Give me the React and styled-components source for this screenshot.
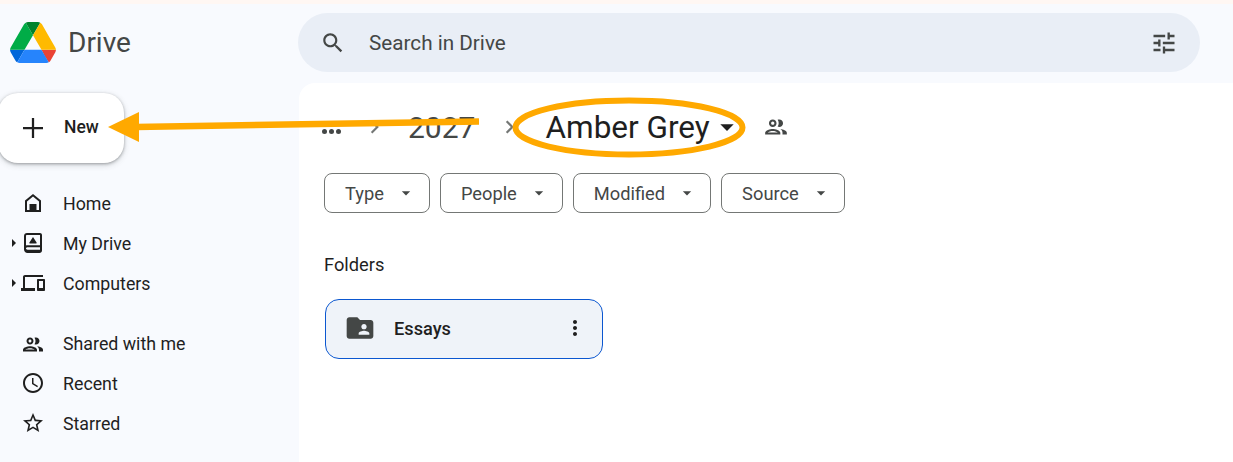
import React from "react";
import styled, { createGlobalStyle } from "styled-components";

const GlobalStyle = createGlobalStyle`
  html, body {
    margin: 0;
    padding: 0;
    height: 100%;
    overflow: hidden;
    background: #f8fafe;
    font-family: Roboto, "Liberation Sans", sans-serif;
    color: #1f1f1f;
  }
`;

const Icon = ({ d, size = 24, color = "#1f1f1f" }) => (
  <svg width={size} height={size} viewBox="0 0 24 24" fill={color} aria-hidden="true">
    <path d={d} />
  </svg>
);

const icons = {
  search: "M15.5 14h-.79l-.28-.27C15.41 12.59 16 11.11 16 9.5 16 5.91 13.09 3 9.5 3S3 5.91 3 9.5 5.91 16 9.5 16c1.61 0 3.09-.59 4.23-1.57l.27.28v.79l5 4.99L20.49 19l-4.99-5zm-6 0C7.01 14 5 11.99 5 9.5S7.01 5 9.5 5 14 7.01 14 9.5 11.99 14 9.5 14z",
  tune: "M3 17v2h6v-2H3zM3 5v2h10V5H3zm10 16v-2h8v-2h-8v-2h-2v6h2zM7 9v2H3v2h4v2h2V9H7zm14 4v-2H11v2h10zm-6-4h2V7h4V5h-4V3h-2v6z",
  plus: "M20 12.9h-7.1V20h-1.8v-7.1H4v-1.8h7.1V4h1.8v7.1H20z",
  home: "M12 3 4 9.6V21h16V9.6L12 3zM6 10.5l6-5 6 5V19h-2.5v-6h-7v6H6z",
  drive: "M6 2h13c1.1 0 2 .9 2 2v15.5c0 1.4-1.1 2.5-2.5 2.5H6.5C4.6 22 3 20.4 3 18.5V5c0-1.7 1.3-3 3-3zm0 2c-.6 0-1 .4-1 1v9.6c.4-.2.9-.3 1.5-.3H19V4H6zm.5 12.3c-.9 0-1.5.6-1.5 1.2s.6 1.2 1.5 1.2H19v-2.4H6.5zM12 6l3.6 5.6c.2.5-.1 1-.6 1H9c-.5 0-.8-.5-.6-1L12 6z",
  computers: "M4 6h18V4H4c-1.1 0-2 .9-2 2v11H0v3h14v-3H4V6zm19 2h-6c-.55 0-1 .45-1 1v10c0 .55.45 1 1 1h6c.55 0 1-.45 1-1V9c0-.55-.45-1-1-1zm-1 9h-4v-7h4v7z",
  people: "M9 13.75c-2.34 0-7 1.17-7 3.5V19h14v-1.75c0-2.33-4.66-3.5-7-3.5zM4.34 17c.84-.58 2.87-1.25 4.66-1.25s3.82.67 4.66 1.25H4.34zM9 12c1.93 0 3.5-1.57 3.5-3.5S10.93 5 9 5 5.5 6.57 5.5 8.5 7.07 12 9 12zm0-5c.83 0 1.5.67 1.5 1.5S9.83 10 9 10s-1.5-.67-1.5-1.5S8.17 7 9 7zm7.04 6.81c1.16.84 1.96 1.96 1.96 3.44V19h4v-1.75c0-2.02-3.5-3.17-5.96-3.44zM15 12c1.93 0 3.5-1.57 3.5-3.5S16.93 5 15 5c-.54 0-1.04.13-1.5.35.63.89 1 1.98 1 3.15s-.37 2.26-1 3.15c.46.22.96.35 1.5.35z",
  clock: "M11.99 2C6.47 2 2 6.48 2 12s4.47 10 9.99 10C17.52 22 22 17.52 22 12S17.52 2 11.99 2zM12 20c-4.42 0-8-3.58-8-8s3.58-8 8-8 8 3.58 8 8-3.58 8-8 8zm.5-13H11v6l5.25 3.15.75-1.23-4.5-2.67z",
  star: "M22 9.24l-7.19-.62L12 2 9.19 8.63 2 9.24l5.46 4.73L5.82 21 12 17.27 18.18 21l-1.63-7.03L22 9.24zM12 15.4l-3.76 2.27 1-4.28-3.32-2.88 4.38-.38L12 6.1l1.71 4.04 4.38.38-3.32 2.88 1 4.28L12 15.4z",
  chevron: "M9.6 6 8.2 7.4 12.8 12l-4.6 4.6L9.6 18l6-6z",
  caret: "M7 10l5 5 5-5z",
  more: "M12 8c1.1 0 2-.9 2-2s-.9-2-2-2-2 .9-2 2 .9 2 2 2zm0 2c-1.1 0-2 .9-2 2s.9 2 2 2 2-.9 2-2-.9-2-2-2zm0 6c-1.1 0-2 .9-2 2s.9 2 2 2 2-.9 2-2-.9-2-2-2z",
  folder: "M20 6h-8l-2-2H4c-1.1 0-1.99.9-1.99 2L2 18c0 1.1.9 2 2 2h16c1.1 0 2-.9 2-2V8c0-1.1-.9-2-2-2zm-5 3c1.1 0 2 .9 2 2s-.9 2-2 2-2-.9-2-2 .9-2 2-2zm4 8h-8v-1c0-1.33 2.67-2 4-2s4 .67 4 2v1z",
};

const DriveLogo = () => (
  <svg width="46" height="41" viewBox="0 0 87.3 78" aria-hidden="true">
    <path d="m6.6 66.85 3.85 6.65c.8 1.4 1.95 2.5 3.3 3.3l13.75-23.8h-27.5c0 1.55.4 3.1 1.2 4.5z" fill="#0066da" />
    <path d="m43.65 25-13.75-23.8c-1.35.8-2.5 1.9-3.3 3.3l-25.4 44a9.06 9.06 0 0 0 -1.2 4.5h27.5z" fill="#00ac47" />
    <path d="m73.55 76.8c1.35-.8 2.5-1.9 3.3-3.3l1.6-2.75 7.65-13.25c.8-1.4 1.2-2.95 1.2-4.5h-27.502l5.852 11.5z" fill="#ea4335" />
    <path d="m43.65 25 13.75-23.8c-1.35-.8-2.9-1.2-4.5-1.2h-18.5c-1.6 0-3.15.45-4.5 1.2z" fill="#00832d" />
    <path d="m59.8 53h-32.3l-13.75 23.8c1.35.8 2.9 1.2 4.5 1.2h50.8c1.6 0 3.15-.45 4.5-1.2z" fill="#2684fc" />
    <path d="m73.4 26.5-12.7-22c-.8-1.4-1.95-2.5-3.3-3.3l-13.75 23.8 16.15 28h27.45c0-1.55-.4-3.1-1.2-4.5z" fill="#ffba00" />
  </svg>
);

const navTop = [
  { label: "Home", icon: "home" },
  { label: "My Drive", icon: "drive", expandable: true },
  { label: "Computers", icon: "computers", expandable: true },
];

const navBottom = [
  { label: "Shared with me", icon: "people" },
  { label: "Recent", icon: "clock" },
  { label: "Starred", icon: "star" },
];

const filters = ["Type", "People", "Modified", "Source"];

const NavGroup = ({ items }) => (
  <NavList>
    {items.map((item) => (
      <NavItem key={item.label}>
        {item.expandable && <Expander />}
        <NavIcon>
          <Icon d={icons[item.icon]} size={item.icon === "people" ? 27 : 24} />
        </NavIcon>
        {item.label}
      </NavItem>
    ))}
  </NavList>
);

export default function App() {
  return (
    <Page>
      <GlobalStyle />
      <TopStrip />
      <Header>
        <Brand>
          <DriveLogo />
          <BrandName>Drive</BrandName>
        </Brand>
        <SearchBar>
          <Icon d={icons.search} size={26} color="#444746" />
          <SearchText>Search in Drive</SearchText>
          <Icon d={icons.tune} size={28} color="#444746" />
        </SearchBar>
      </Header>
      <Body>
        <Sidebar>
          <NewButton>
            <Icon d={icons.plus} size={30} />
            <NewLabel>New</NewLabel>
          </NewButton>
          <NavGroup items={navTop} />
          <NavGroup items={navBottom} />
        </Sidebar>
        <Main>
          <Breadcrumbs>
            <Dots>
              <Dot />
              <Dot />
              <Dot />
            </Dots>
            <Crumb>
              <Icon d={icons.chevron} size={26} color="#747775" />
            </Crumb>
            <CrumbText>2027</CrumbText>
            <Crumb>
              <Icon d={icons.chevron} size={26} color="#747775" />
            </Crumb>
            <CurrentCrumb>
              Amber Grey
              <Icon d={icons.caret} size={32} />
            </CurrentCrumb>
            <SharedIcon>
              <Icon d={icons.people} size={26} color="#444746" />
            </SharedIcon>
          </Breadcrumbs>
          <FilterRow>
            {filters.map((f) => (
              <FilterChip key={f}>
                {f}
                <Icon d={icons.caret} size={20} color="#444746" />
              </FilterChip>
            ))}
          </FilterRow>
          <SectionTitle>Folders</SectionTitle>
          <FolderCard>
            <Icon d={icons.folder} size={32} color="#444746" />
            <FolderName>Essays</FolderName>
            <Icon d={icons.more} size={24} />
          </FolderCard>
        </Main>
      </Body>
      <Annotation viewBox="0 0 1233 462" aria-hidden="true">
        <ellipse cx="629" cy="127.5" rx="113.5" ry="27" fill="none" stroke="#ffa900" strokeWidth="6" />
        <path d="M479 121.5 136 127" stroke="#ffa900" strokeWidth="6.5" fill="none" />
        <path d="M108 127 139 112V142z" fill="#ffa900" />
      </Annotation>
    </Page>
  );
}

const Page = styled.div`
  position: relative;
  width: 1233px;
  height: 462px;
  overflow: hidden;
`;

const TopStrip = styled.div`
  height: 4px;
  background: #fff7f3;
`;

const Header = styled.header`
  display: flex;
  align-items: flex-start;
  height: 79px;
  padding-top: 9px;
  box-sizing: border-box;
`;

const Brand = styled.div`
  display: flex;
  align-items: center;
  gap: 12px;
  width: 298px;
  height: 59px;
  padding-left: 10px;
  box-sizing: border-box;
`;

const BrandName = styled.span`
  font-size: 28px;
  color: #444746;
`;

const SearchBar = styled.div`
  display: flex;
  align-items: center;
  width: 902px;
  height: 59px;
  padding: 0 22px;
  box-sizing: border-box;
  border-radius: 30px;
  background: #e9eef6;
`;

const SearchText = styled.span`
  flex: 1;
  margin-left: 23px;
  font-size: 20.7px;
  color: #444746;
`;

const Body = styled.div`
  display: flex;
  height: 379px;
`;

const Sidebar = styled.aside`
  display: flex;
  flex-direction: column;
  gap: 20px;
  width: 299px;
  padding-top: 10px;
  box-sizing: border-box;
`;

const NewButton = styled.div`
  display: flex;
  align-items: center;
  gap: 16px;
  width: 126px;
  height: 70px;
  margin-left: -2px;
  padding-left: 20px;
  box-sizing: border-box;
  border-radius: 20px;
  background: #fff;
  box-shadow: 0 1px 3px rgba(60, 64, 67, 0.4), 0 2px 6px rgba(60, 64, 67, 0.2);
`;

const NewLabel = styled.span`
  padding-bottom: 2px;
  font-size: 17.5px;
  font-weight: 500;
`;

const NavList = styled.nav`
  display: flex;
  flex-direction: column;
`;

const NavItem = styled.div`
  position: relative;
  display: flex;
  align-items: center;
  gap: 18px;
  height: 40px;
  padding-left: 21px;
  font-size: 17.8px;
  color: #1f1f1f;
`;

const NavIcon = styled.span`
  display: flex;
  justify-content: center;
  width: 24px;
  height: 24px;
`;

const Expander = styled.span`
  position: absolute;
  left: 12px;
  top: 16px;
  border-left: 4px solid #1f1f1f;
  border-top: 4px solid transparent;
  border-bottom: 4px solid transparent;
`;

const Main = styled.main`
  flex: 1;
  padding: 0 25px;
  border-radius: 16px 0 0 0;
  background: #fff;
`;

const Breadcrumbs = styled.div`
  display: flex;
  align-items: center;
  height: 88px;
  margin: 0 0 2px -2px;
`;

const Dots = styled.span`
  display: flex;
  gap: 2px;
  width: 40px;
  padding-top: 9px;
`;

const Dot = styled.span`
  width: 5px;
  height: 5px;
  border-radius: 50%;
  background: #444746;
`;

const Crumb = styled.span`
  display: flex;
  width: 26px;
`;

const CrumbText = styled.span`
  margin: 0 22px 0 20px;
  font-size: 30px;
  color: #444746;
`;

const CurrentCrumb = styled.span`
  display: flex;
  align-items: center;
  gap: 1px;
  margin-left: 22px;
  font-size: 31.5px;
  color: #1f1f1f;
`;

const SharedIcon = styled.span`
  display: flex;
  margin-left: 20px;
`;

const FilterRow = styled.div`
  display: flex;
  gap: 10px;
`;

const FilterChip = styled.div`
  display: flex;
  align-items: center;
  justify-content: space-between;
  height: 40px;
  padding: 0 13px 0 20px;
  gap: 12px;
  box-sizing: border-box;
  border: 1px solid #747775;
  border-radius: 8px;
  font-size: 18.3px;
  color: #444746;
`;

const SectionTitle = styled.h2`
  margin: 41px 0 0;
  font-size: 18.3px;
  font-weight: 400;
  line-height: 22px;
  color: #1f1f1f;
`;

const FolderCard = styled.div`
  display: flex;
  align-items: center;
  width: 278px;
  height: 60px;
  margin: 23px 0 0 1px;
  padding: 0 15px 2px 18px;
  box-sizing: border-box;
  border: 1px solid #0b57d0;
  border-radius: 14px;
  background: #eff3f9;
`;

const FolderName = styled.span`
  flex: 1;
  margin-left: 18px;
  font-size: 18.2px;
  font-weight: 500;
`;

const Annotation = styled.svg`
  position: absolute;
  left: 0;
  top: 0;
  width: 1233px;
  height: 462px;
  pointer-events: none;
`;
